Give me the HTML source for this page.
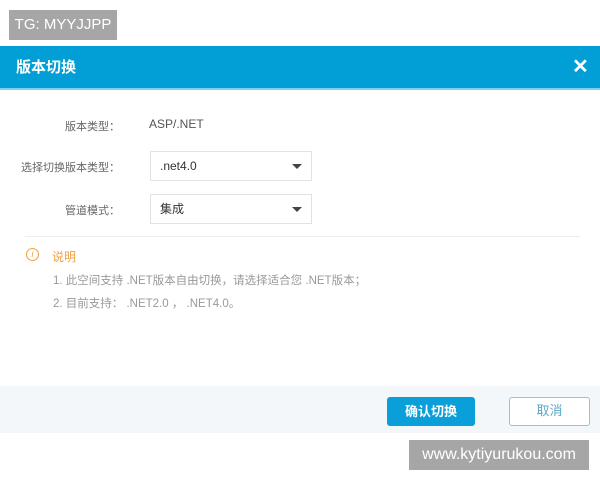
<!DOCTYPE html><html><head><meta charset="utf-8"><style>
body{margin:0;width:600px;height:480px;background:#fff;position:relative;overflow:hidden;font-family:"Liberation Sans","Noto Sans CJK SC",sans-serif}
.a{position:absolute}
.lab{position:absolute;right:480px;font-size:11px;color:#666;white-space:nowrap}
.sel{position:absolute;left:150px;width:162px;height:30px;border:1px solid #e2e2e2;box-sizing:border-box;font-size:12px;color:#333;line-height:29px;padding-left:9px}
.sel:after{content:"";position:absolute;right:9px;top:12px;border:5px solid transparent;border-top:5px solid #444}
.n{position:absolute;left:53px;font-size:11.5px;color:#999;white-space:nowrap}
</style></head><body>
<div class="a" style="left:9px;top:10px;width:108px;height:30px;background:#a6a6a6;color:#fff;font-size:15px;line-height:30px;text-align:center">TG: MYYJJPP</div>
<div class="a" style="left:0;top:46px;width:600px;height:42px;background:#019fd6;border-bottom:2px solid #7dd0ee"></div>
<div class="a" style="left:16px;top:56px;color:#fff;font-size:15px;font-weight:bold">版本切换</div>
<div class="a" style="left:572px;top:54px;color:#fff;font-size:20px;font-weight:bold">✕</div>
<div class="lab" style="top:118px">版本类型：</div>
<div class="a" style="left:149px;top:117px;font-size:12px;color:#555">ASP/.NET</div>
<div class="lab" style="top:159px">选择切换版本类型：</div>
<div class="sel" style="top:151px">.net4.0</div>
<div class="lab" style="top:202px">管道模式：</div>
<div class="sel" style="top:194px">集成</div>
<div class="a" style="left:25px;top:236px;width:555px;height:1px;background:#eee"></div>
<div class="a" style="left:26px;top:248px;width:11px;height:11px;border:1.5px solid #f0a040;border-radius:50%;color:#f0a040;font-size:9px;font-style:italic;text-align:center;line-height:11px">i</div>
<div class="a" style="left:52px;top:248px;font-size:12px;color:#f0a040">说明</div>
<div class="n" style="top:272px">1. 此空间支持 .NET版本自由切换，请选择适合您 .NET版本；</div>
<div class="n" style="top:295px">2. 目前支持： .NET2.0 ， .NET4.0。</div>
<div class="a" style="left:0;top:386px;width:600px;height:47px;background:#f3f7f9"></div>
<div class="a" style="left:387px;top:397px;width:88px;height:29px;background:#0a9fd8;border-radius:3px;color:#fff;font-size:13px;font-weight:bold;line-height:29px;text-align:center">确认切换</div>
<div class="a" style="left:509px;top:397px;width:81px;height:29px;box-sizing:border-box;border:1.5px solid #8cc8e0;border-radius:3px;color:#5aa8c8;font-size:13px;line-height:26px;text-align:center;background:#fff">取消</div>
<div class="a" style="left:409px;top:440px;width:180px;height:30px;background:#a6a6a6;color:#fff;font-size:16px;line-height:30px;text-align:center">www.kytiyurukou.com</div>
</body></html>
